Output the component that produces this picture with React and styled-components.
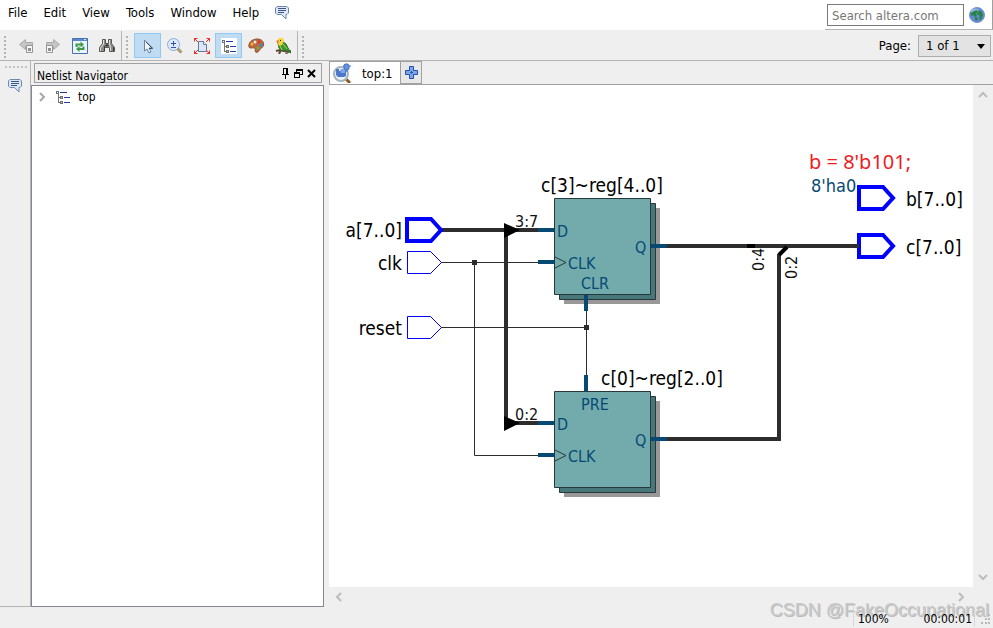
import styled, { createGlobalStyle, css } from "styled-components"
import { useState } from "react"

const GlobalStyle = createGlobalStyle`
  * {
    box-sizing: border-box;
  }
  body {
    margin: 0;
    background: #efefef;
    color: #000;
    font-family: "DejaVu Sans Condensed", "Noto Sans", sans-serif;
    font-size: 13px;
  }
  button, input, select {
    font-family: inherit;
    font-size: 13px;
    color: inherit;
  }
`

const Window = styled.div`
  position: relative;
  display: flex;
  flex-direction: column;
  height: 100vh;
  overflow: hidden;
`

/* menu bar */
const MenuBar = styled.header`
  display: flex;
  justify-content: space-between;
  height: 31px;
  flex: none;
  background: #fff;
  border-bottom: 1px solid #f0f0f0;
`
const Menu = styled.nav`
  display: flex;
  height: 25px;
`
const MenuButton = styled.button`
  display: flex;
  align-items: center;
  padding: 0 8px;
  border: 0;
  background: none;
`
const SearchBox = styled.form`
  display: flex;
  gap: 5px;
  height: 30px;
  padding: 4px 7px 3px 2px;
  border-right: 1px solid #a0a0a0;
  border-bottom: 1px solid #b4b4b4;
`
const SearchInput = styled.input`
  width: 137px;
  height: 22px;
  padding: 0 4px;
  border: 1px solid #7a7a7a;
  border-radius: 0;
  &::placeholder {
    color: #777;
    opacity: 1;
  }
`
const IconButton = styled.button`
  display: flex;
  align-items: center;
  justify-content: center;
  padding: 0;
  border: 0;
  background: none;
`

/* tool bar */
const ToolBar = styled.div`
  display: flex;
  height: 30px;
  flex: none;
  border-bottom: 1px solid #b4b4b4;
`
const ToolGroup = styled.div`
  display: flex;
  align-items: center;
  padding-right: 1px;
  border-right: 1px solid #b4b4b4;
`
const Grip = styled.div`
  align-self: center;
  width: 12px;
  height: 24px;
  background: conic-gradient(from 90deg at 4px 2px, #b4b4b4 90deg, transparent 0) 0 0 / 6px 4px repeat-y;
`
const ToolButton = styled(IconButton)`
  width: 27px;
  height: 25px;
  ${props => props.$active && css`
    background: #c0dcf3;
    border: 1px solid #90c8f6;
  `}
`
const PageField = styled.label`
  display: flex;
  align-items: center;
  gap: 7px;
  margin-left: auto;
  padding-right: 2px;
`
const SelectWrap = styled.span`
  position: relative;
  display: flex;
  svg {
    position: absolute;
    right: 6px;
    top: 9px;
    pointer-events: none;
  }
`
const PageSelect = styled.select`
  width: 73px;
  height: 22px;
  padding: 0 7px;
  appearance: none;
  background: #e3e3e3;
  border: 1px solid #adadad;
  border-radius: 0;
`

/* work area */
const Work = styled.div`
  display: flex;
  flex: 1;
  min-height: 0;
`
const Rail = styled.aside`
  display: flex;
  flex-direction: column;
  align-items: center;
  gap: 10px;
  width: 31px;
  padding-top: 4px;
  border-right: 1px solid #b4b4b4;
  border-bottom: 1px solid #b4b4b4;
`
const RailGrip = styled.div`
  width: 24px;
  height: 4px;
  background: conic-gradient(from 90deg at 2px 1px, #c4c4c4 90deg, transparent 0) 0 0 / 4px 3px repeat-x;
`
const Dock = styled.section`
  display: flex;
  flex-direction: column;
  width: 293px;
  padding-top: 2px;
  font-size: 12px;
`
const DockTitle = styled.div`
  display: flex;
  align-items: center;
  height: 20px;
  margin: 0 2px 2px 3px;
  padding: 0 3px 0 2px;
  border: 1px solid #a0a0a0;
`
const DockName = styled.h2`
  flex: 1;
  margin: 0;
  padding-top: 6px;
  font-size: 12px;
  line-height: 14px;
  font-weight: 400;
`
const DockButton = styled(IconButton)`
  width: 13px;
  height: 16px;
`
const Tree = styled.ul`
  flex: 1;
  margin: 0;
  padding: 2px 0 0 4px;
  list-style: none;
  background: #fff;
  border: 1px solid #828790;
`
const TreeItem = styled.li`
  display: flex;
  align-items: center;
  gap: 7px;
  height: 17px;
`
const TreeToggle = styled(IconButton)`
  width: 12px;
  height: 16px;
`
const Viewer = styled.main`
  display: flex;
  flex-direction: column;
  flex: 1;
  min-width: 0;
  margin-left: 5px;
`
const Tabs = styled.div`
  display: flex;
  height: 24px;
  flex: none;
  border-bottom: 1px solid #a0a0a0;
`
const Tab = styled.button`
  display: flex;
  align-items: center;
  gap: 10px;
  width: 72px;
  height: 23px;
  padding: 0 0 0 2px;
  background: #fff;
  border: 1px solid #a0a0a0;
  border-bottom: 0;
`
const AddTab = styled(IconButton)`
  width: 21px;
  height: 23px;
  background: #e8e8e8;
  border: 1px solid #a0a0a0;
  border-left: 0;
`
const Pane = styled.div`
  display: grid;
  grid-template-columns: minmax(0, 1fr) 20px;
  grid-template-rows: minmax(0, 1fr) 20px;
  flex: 1;
  min-height: 0;
`
const Canvas = styled.div`
  overflow: hidden;
  background: #fff;
`
const ScrollBar = styled.div`
  display: flex;
  flex-direction: ${props => (props.$vertical ? "column" : "row")};
  justify-content: space-between;
  ${props => !props.$vertical && "padding-right: 2px;"}
`
const ScrollButton = styled(IconButton)`
  width: 20px;
  height: 20px;
`
const StatusBar = styled.footer`
  position: relative;
  z-index: 1;
  display: flex;
  align-items: flex-start;
  justify-content: flex-end;
  height: 21px;
  flex: none;
  font-size: 12px;
`
const StatusItem = styled.span`
  height: 19px;
  padding: 4px 0 0 4px;
  width: ${props => props.$width};
  border-left: 1px solid #d7d7d7;
  line-height: 16px;
  ${props => props.$right && css`
    border-left: 0;
    border-right: 1px solid #d7d7d7;
    text-align: right;
    padding-right: 2px;
  `}
`
const SizeGrip = styled.svg`
  margin: 7px 2px 0 6px;
`
const Watermark = styled.span`
  position: absolute;
  right: 4px;
  bottom: 7px;
  color: #c8c8c8;
  font-family: "Liberation Sans", sans-serif;
  font-size: 18px;
  line-height: 22px;
  text-shadow: 1px 1px 0 #bcbcbc;
  pointer-events: none;
`

/* schematic text */
const NetName = styled.text`
  font-size: 19px;
  fill: #000;
`
const ConstValue = styled.text`
  font-size: 18px;
  fill: #064a73;
`
const PinName = styled.text`
  font-size: 16px;
  fill: #064a73;
`
const BusRange = styled.text`
  font-size: 16px;
  fill: #111;
`
const NoteText = styled.text`
  font-family: "Noto Sans", sans-serif;
  font-size: 20px;
  fill: #ed1c24;
`

const Svg = ({ size = 16, h, children, ...rest }) => (
  <svg width={size} height={h || size} viewBox={`0 0 ${size} ${h || size}`} fill="none" aria-hidden="true" {...rest}>
    {children}
  </svg>
)

const ChatIcon = () => (
  <Svg size={14}>
    <path d="M2 .5h10L13.500 2v5L12 8.500h-1V13L6.500 8.500H2L.5 7V2z" fill="#dbe8f8" stroke="#7088ae" />
    <path d="M3 2.500h8M3 4.500h8M3 6.500h6" stroke="#3d5580" />
  </Svg>
)
const GlobeIcon = () => (
  <Svg>
    <circle cx="8" cy="8" r="7.500" fill="#6589d0" stroke="#7293cd" />
    <ellipse cx="6" cy="4" rx="4" ry="2.500" fill="#a9bfeb" opacity=".8" />
    <path d="M2 6l3-2 3-1 1 2-2 2 1 2-2 1-2-2-2 1zM10 3l3 2 1 3-2 5-2-1 1-3-3-2 1-2zM6 10l3 1-1 3-2-1z" fill="#278346" />
  </Svg>
)
const ArrowIcon = ({ forward }) => (
  <Svg>
    <path
      d={forward ? "M1.500 4.500h7v-3l6 5-6 5v-3h-7z" : "M14.500 4.500h-7v-3l-6 5 6 5v-3h7z"}
      fill="#c6c6c6" stroke="#a9a9a9"
    />
    <g transform={forward ? "translate(1 7)" : "translate(8 7)"}>
      <path d="M.5.5h6v7h-6z" fill="#f7f7f7" stroke="#959595" />
      <path d="M2 3h3v3H2z" fill="#909090" />
    </g>
  </Svg>
)
const RefreshIcon = () => (
  <Svg>
    <path d="M.5.5h15v15H.5z" fill="#eef4fc" stroke="#4470b4" />
    <path d="M1 1h14v2H1z" fill="#5887cc" />
    <path d="M12 1h2v1h-2z" fill="#dceaff" />
    <path d="M4.500 9V6.500H9M11.500 8.500V11H7" stroke="#3f9a48" strokeWidth="2" />
    <path d="M8.500 3.500l3.500 3-3.500 3zM7.500 8l-3.500 3 3.500 3z" fill="#3f9a48" />
  </Svg>
)
const BinocularsIcon = () => (
  <Svg>
    <path d="M3.500 1.500h3v4h3v-4h3v4l3 4v4h-5v-4h-5v4h-5v-4l3-4z" fill="#8a8a86" stroke="#5a5a56" />
    <path d="M4.500 2v4l-3 4v3M10.500 2v4l1 4v3" stroke="#e2e2de" />
    <path d="M5.500 8v5M14.500 9v4M6 7.500h4M8 5v4" stroke="#3a3a38" />
  </Svg>
)
const CursorIcon = () => (
  <Svg>
    <path d="M4.500 2v11l2.500-2 2 4 2-1-2-4h3.500z" fill="#f3f6fb" stroke="#6e80a5" />
    <path d="M9 10.500h3.500L6 4" stroke="#3d4f72" />
  </Svg>
)
const ZoomIcon = () => (
  <Svg>
    <path d="M10.500 10.500l4 4" stroke="#9b8a6c" strokeWidth="3" />
    <path d="M11.500 11l3 3" stroke="#e8bd5b" />
    <circle cx="6.500" cy="6.500" r="6" fill="#dceafb" stroke="#8cacda" />
    <path d="M4 5.500h5M6.500 3v5M4 9.500h5" stroke="#3451a5" />
  </Svg>
)
const FitIcon = () => (
  <Svg>
    <path d="M4.500 3.500h5l3 3v7h-8z" fill="#dbe7f8" stroke="#6479a0" />
    <path d="M9.500 3.500v3h3" fill="#fff" stroke="#6479a0" />
    <path d="M0 3.500V0h3.500M12.500 0H16v3.500M16 12.500V16h-3.500M3.500 16H0v-3.500" stroke="#ee2e2e" strokeWidth="2" />
    <path d="M1 1l3 3M15 1l-3 3M15 15l-3-3M1 15l3-3" stroke="#ee2e2e" />
  </Svg>
)
const HierarchyIcon = ({ boxed }) => (
  <Svg shapeRendering="crispEdges">
    {boxed && <path d="M0 0h16v16H0z" fill="#fff" />}
    <path d="M3.500 3v10.500H6M3.500 8.500H6" stroke="#777" />
    <path d="M5 3.500h7M9 8.500h6M9 13.500h6" stroke="#27379b" />
    <path d="M1 2h3v3H1zM5 7h3v3H5zM5 12h3v3H5z" fill="#687181" />
    <path d="M2 3h1v1H2z" fill="#fff" />
    <path d="M6 8h1v1H6zM6 13h1v1H6z" fill="#ffbc20" />
  </Svg>
)
const PaletteIcon = () => (
  <Svg>
    <path d="M1 9C0 5 4 1 9 1c5 0 7 3 6.500 6-.5 3-3 3-4 5-1 2-2.500 3-4 2-1-1 1-3-1-4-2-.8-5 1-5.500-1z" fill="#bb6841" stroke="#91502f" />
    <circle cx="4" cy="6" r="1.500" fill="#ffb329" />
    <circle cx="7" cy="4" r="1.500" fill="#e7ede7" />
    <circle cx="11" cy="4" r="1.500" fill="#e93626" />
    <circle cx="13" cy="7" r="1.500" fill="#368bd3" />
    <circle cx="10" cy="10" r="1.500" fill="#65b74d" />
  </Svg>
)
const ParrotIcon = () => (
  <Svg>
    <path d="M1 13l4-1 8 2 3-1M4 16l2-4M10 13l2 3" stroke="#634a33" strokeWidth="2" />
    <path d="M3 5l4-2 4 3 2 4 3 5-5-3-3 1-4-3z" fill="#399331" stroke="#276e29" />
    <path d="M2 3l2-3h4l1 3-2 4-3 1z" fill="#f6d63c" />
    <path d="M1 3l3-1-1 4z" fill="#dc793e" />
    <path d="M5 8l2 4M8 6l4 5" stroke="#b4d839" />
    <path d="M5 2h1v1H5z" fill="#222" />
  </Svg>
)
const LensIcon = () => (
  <Svg size={20}>
    <path d="M13 15l5 5" stroke="#8c5a22" strokeWidth="3" />
    <circle cx="9" cy="11" r="7" fill="#eaf1f8" stroke="#a3b3bf" strokeWidth="2" />
    <path d="M4 6h3v2h1l2-2h3l1 2v5l-2 1H6l-2-2z" fill="#4b78ca" />
    <path d="M8 7l2-1h3v4H9z" fill="#7fa5e8" />
    <path d="M11 3h8M15 1v8" stroke="#3769ba" />
    <path d="M13 1h3l1 2v3l-2 1h-2l-1-2V2z" fill="#6590dd" stroke="#4676c6" />
  </Svg>
)
const PlusIcon = () => (
  <Svg size={13}>
    <path d="M4.500.5h4v4h4v4h-4v4h-4v-4h-4v-4h4z" fill="#7ba6ea" stroke="#2450a7" />
    <path d="M5 6.500h3M6.500 5v3" stroke="#3159ae" />
  </Svg>
)
const PinIcon = () => (
  <Svg size={9} h={11} shapeRendering="crispEdges">
    <path d="M2.500 6V.5h4V6M1 6.500h7M4.500 7v4M5.500 1v5" stroke="#000" />
  </Svg>
)
const RestoreIcon = () => (
  <Svg size={9} shapeRendering="crispEdges">
    <path d="M2.500 4V.5h6v5H6M.5 3.500h5v5h-5zM2 1.500h7M0 4.500h6" stroke="#000" />
  </Svg>
)
const CloseIcon = () => (
  <Svg size={9}>
    <path d="M1 1l7 7M8 1L1 8" stroke="#000" strokeWidth="2" />
  </Svg>
)
const turns = { right: 0, down: 90, left: 180, up: 270 }
const Chevron = ({ to, color = "#bcbcbc" }) => (
  <Svg size={12}>
    <path d="M4 2l4 4-4 4" stroke={color} strokeWidth="2" transform={`rotate(${turns[to]} 6 6)`} />
  </Svg>
)

const Port = ({ x, y, bus }) => (
  <path
    d={bus ? `M${x} ${y - 11}h24l10 11-10 11h-24z` : `M${x} ${y - 11}h23l11 11-11 11h-23z`}
    fill="#fff" stroke="#0000ff" strokeWidth={bus ? 4 : 1}
  />
)

// 97px square with two offset copies behind it
const Register = ({ x, y, control, controlY }) => (
  <g transform={`translate(${x} ${y})`}>
    <path d="M10 10h96v96H10z" fill="#999797" />
    <path d="M5.500 5.500h96v96h-96z" fill="#477778" stroke="#26383b" />
    <path d="M.5.5h96v96H.5z" fill="#73abad" stroke="#26383b" />
    <path d="M1 59l11 5.500L1 70" stroke="#26383b" fill="none" />
    <path d="M-16 32H0M-16 64H0M97 48h16" stroke="#064a73" strokeWidth="4" />
    <PinName x="3" y="39">D</PinName>
    <PinName x="14" y="71">CLK</PinName>
    <PinName x="81" y="55">Q</PinName>
    <PinName x="41" y={controlY} textAnchor="middle">{control}</PinName>
  </g>
)

const Schematic = () => (
  <svg width="644" height="502" viewBox="329 85 644 502" role="img" aria-label="top netlist">
    <g stroke="#2d2d2d" fill="none">
      <path d="M441 262.500h98M474.500 262v193.500H539M441 327.500h145.500M586.500 310v66" />
      <path d="M441 230h98M506 230v193h33M667 246h190M667 439h112V254" strokeWidth="4" />
      <path d="M779 255l8-8" stroke="#000" strokeWidth="4" />
    </g>
    <path d="M504 223l16 7-16 8zM504 416l16 7-16 8zM747 244h8v4h-8z" fill="#000" />
    <path d="M472 260h5v5h-5zM584 325h5v5h-5z" fill="#2d2d2d" />
    <Register x={554} y={198} control="CLR" controlY={91} />
    <Register x={554} y={391} control="PRE" controlY={19} />
    <path d="M586 295v16M586 375v16" stroke="#064a73" strokeWidth="4" />
    <Port x={407} y={230} bus />
    <Port x={407.5} y={262.5} />
    <Port x={407.5} y={327.5} />
    <Port x={859} y={198} bus />
    <Port x={859} y={246} bus />
    <path d="M850 246h9" stroke="#2d2d2d" strokeWidth="4" />
    <NetName x="402" y="237" textAnchor="end">a[7..0]</NetName>
    <NetName x="402" y="270" textAnchor="end">clk</NetName>
    <NetName x="402" y="335" textAnchor="end">reset</NetName>
    <NetName x="541" y="192">c[3]~reg[4..0]</NetName>
    <NetName x="601" y="385">c[0]~reg[2..0]</NetName>
    <NetName x="906" y="206">b[7..0]</NetName>
    <NetName x="906" y="254">c[7..0]</NetName>
    <BusRange x="515" y="227">3:7</BusRange>
    <BusRange x="515" y="420">0:2</BusRange>
    <BusRange transform="translate(764 271) rotate(-90)">0:4</BusRange>
    <BusRange transform="translate(797 279) rotate(-90)">0:2</BusRange>
    <ConstValue x="811" y="192">8'ha0</ConstValue>
    <NoteText x="809" y="169">b = 8'b101;</NoteText>
  </svg>
)

const menus = ["File", "Edit", "View", "Tools", "Window", "Help"]

const App = () => {
  const [tool, setTool] = useState("select")
  const [navigator, setNavigator] = useState(true)

  return (
    <Window>
      <GlobalStyle />
      <MenuBar>
        <Menu>
          {menus.map(m => <MenuButton key={m}>{m}</MenuButton>)}
          <MenuButton aria-label="Feedback"><ChatIcon /></MenuButton>
        </Menu>
        <SearchBox onSubmit={e => e.preventDefault()}>
          <SearchInput aria-label="Search altera.com" placeholder="Search altera.com" />
          <IconButton aria-label="Search"><GlobeIcon /></IconButton>
        </SearchBox>
      </MenuBar>
      <ToolBar>
        <ToolGroup>
          <Grip />
          <ToolButton aria-label="Back"><ArrowIcon /></ToolButton>
          <ToolButton aria-label="Forward"><ArrowIcon forward /></ToolButton>
          <ToolButton aria-label="Refresh"><RefreshIcon /></ToolButton>
          <ToolButton aria-label="Find"><BinocularsIcon /></ToolButton>
        </ToolGroup>
        <ToolGroup>
          <Grip />
          <ToolButton aria-label="Select" $active={tool === "select"} onClick={() => setTool("select")}><CursorIcon /></ToolButton>
          <ToolButton aria-label="Zoom" $active={tool === "zoom"} onClick={() => setTool("zoom")}><ZoomIcon /></ToolButton>
          <ToolButton aria-label="Fit in window"><FitIcon /></ToolButton>
          <ToolButton aria-label="Netlist Navigator" $active={navigator} onClick={() => setNavigator(!navigator)}><HierarchyIcon boxed /></ToolButton>
          <ToolButton aria-label="Colors"><PaletteIcon /></ToolButton>
          <ToolButton aria-label="Bird's eye view"><ParrotIcon /></ToolButton>
        </ToolGroup>
        <Grip />
        <PageField>
          Page:
          <SelectWrap>
            <PageSelect>
              <option>1 of 1</option>
            </PageSelect>
            <Svg size={8} h={5}><path d="M0 0h8L4 5z" fill="#000" /></Svg>
          </SelectWrap>
        </PageField>
      </ToolBar>
      <Work>
        <Rail>
          <RailGrip />
          <IconButton aria-label="Messages"><ChatIcon /></IconButton>
        </Rail>
        {navigator && (
          <Dock>
            <DockTitle>
              <DockName>Netlist Navigator</DockName>
              <DockButton aria-label="Pin"><PinIcon /></DockButton>
              <DockButton aria-label="Float"><RestoreIcon /></DockButton>
              <DockButton aria-label="Close" onClick={() => setNavigator(false)}><CloseIcon /></DockButton>
            </DockTitle>
            <Tree>
              <TreeItem>
                <TreeToggle aria-label="Expand top"><Chevron to="right" color="#a6a6a6" /></TreeToggle>
                <HierarchyIcon />
                top
              </TreeItem>
            </Tree>
          </Dock>
        )}
        <Viewer>
          <Tabs>
            <Tab><LensIcon />top:1</Tab>
            <AddTab aria-label="New tab"><PlusIcon /></AddTab>
          </Tabs>
          <Pane>
            <Canvas><Schematic /></Canvas>
            <ScrollBar $vertical>
              <ScrollButton aria-label="Scroll up"><Chevron to="up" /></ScrollButton>
              <ScrollButton aria-label="Scroll down"><Chevron to="down" /></ScrollButton>
            </ScrollBar>
            <ScrollBar>
              <ScrollButton aria-label="Scroll left"><Chevron to="left" /></ScrollButton>
              <ScrollButton aria-label="Scroll right"><Chevron to="right" /></ScrollButton>
            </ScrollBar>
          </Pane>
        </Viewer>
      </Work>
      <StatusBar>
        <StatusItem $width="56px">100%</StatusItem>
        <StatusItem $width="66px" $right>00:00:01</StatusItem>
        <SizeGrip width="10" height="10" viewBox="0 0 10 10" aria-hidden="true">
          <path d="M7 0h2v2H7zM4 4h2v2H4zM7 4h2v2H7zM0 8h2v2H0zM4 8h2v2H4zM7 8h2v2H7z" fill="#b9b9b9" />
        </SizeGrip>
      </StatusBar>
      <Watermark>CSDN @FakeOccupational</Watermark>
    </Window>
  )
}

export default App
